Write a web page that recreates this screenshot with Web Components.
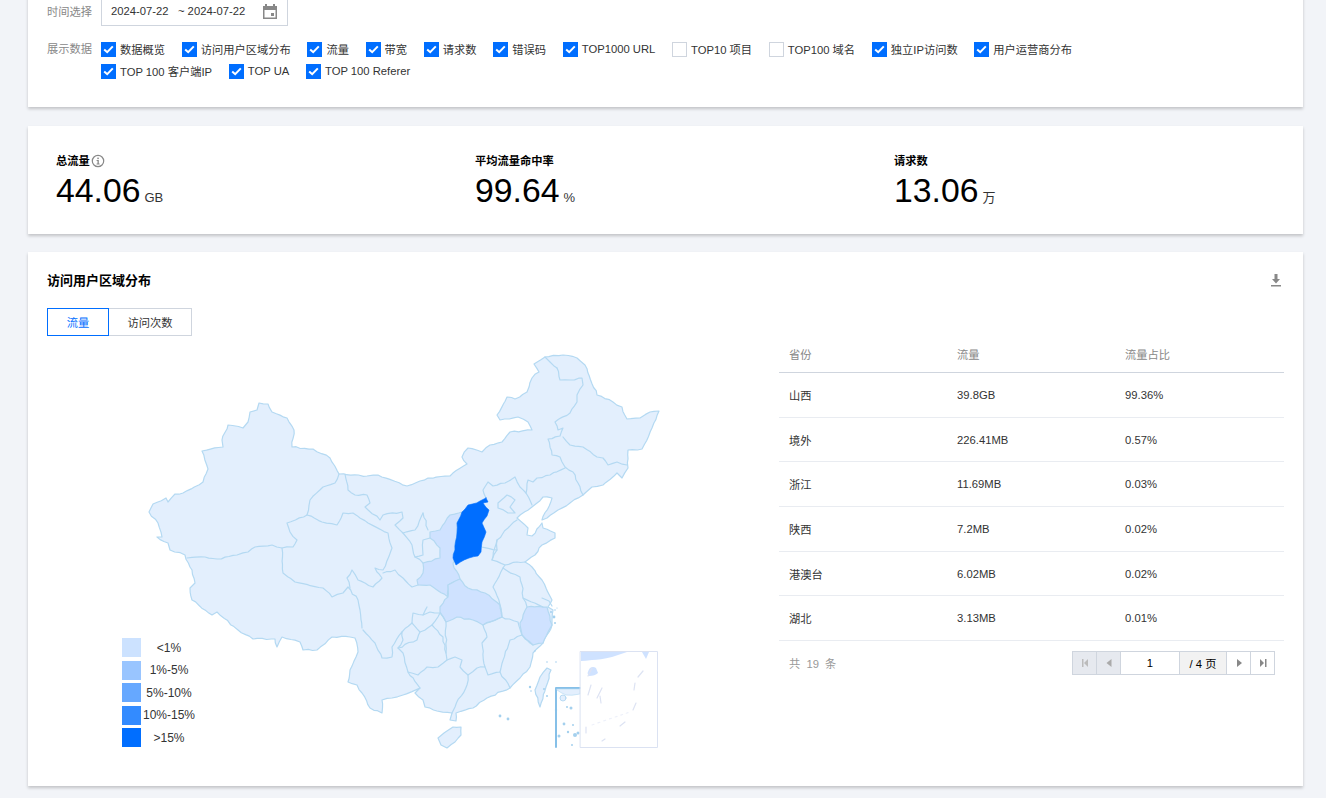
<!DOCTYPE html>
<html lang="zh"><head><meta charset="utf-8"><title>统计</title>
<style>
html,body{margin:0;height:798px;overflow:hidden;background:#f2f4f8;font-family:"Liberation Sans","Noto Sans CJK SC",sans-serif;font-size:11.25px;color:#333}
</style></head><body>
<x-page>
  <x-filter-card></x-filter-card>
  <x-stats-card></x-stats-card>
  <x-region-card></x-region-card>
</x-page>
<script>
const def=(name,html,extra={})=>{customElements.define(name,class extends HTMLElement{
  constructor(){super();this.attachShadow({mode:'open'}).innerHTML=typeof html==='function'?html(this):html;}
  connectedCallback(){ if(extra.init) extra.init(this); }
});};

def('x-page',`<style>:host{display:flex;flex-direction:column;gap:18.500px;padding:0 23px 0 28px;margin-top:-20px}</style><slot></slot>`);

def('x-card',`<style>:host{display:block;background:#fff;box-shadow:0 2px 3px 0 rgba(0,0,0,.2);box-sizing:border-box}</style><slot></slot>`);

def('x-check',`<style>
:host{display:inline-flex;align-items:center;gap:4px;height:22px;white-space:nowrap;color:#333}
.b{width:15px;height:15px;box-sizing:border-box;background:#006eff;display:flex;align-items:center;justify-content:center}
:host([off]) .b{background:#fff;border:1px solid #cfd5de}
:host([off]) svg{display:none}
</style><span class="b"><svg width="11" height="9" viewBox="0 0 11 9"><path d="M1.2 4.4 4.2 7.2 9.8 1.4" fill="none" stroke="#fff" stroke-width="2"/></svg></span><slot></slot>`);

def('x-filter-card',`<style>
:host{display:block}
x-card{height:127px;padding:16px 19px 0}
.r{display:flex;align-items:center}
.lab{width:54px;color:#888;flex:none}
.input{width:187px;height:30px;box-sizing:border-box;border:1px solid #cfd5de;display:flex;align-items:center;padding:0 10px 0 9px;color:#333;justify-content:space-between;white-space:pre}
.row2{margin-top:12px;align-items:flex-start}
.checks{display:flex;flex-wrap:wrap;column-gap:16.700px;width:1100px}
.brk{flex-basis:100%;height:0}
</style>
<x-card>
 <div class="r"><span class="lab">时间选择</span><div class="input"><span>2024-07-22 &nbsp; ~ 2024-07-22</span>
  <svg width="14" height="15" viewBox="0 0 14 15"><path fill="#888" fill-rule="evenodd" d="M2 0h2v2h6V0h2v2h2v13H0V2h2zM1.5 6v7.5h11V6zM8 9h3v3H8z"/></svg></div></div>
 <div class="r row2"><span class="lab" style="line-height:22px">展示数据</span><div class="checks">
  <x-check>数据概览</x-check><x-check>访问用户区域分布</x-check><x-check>流量</x-check><x-check>带宽</x-check><x-check>请求数</x-check><x-check>错误码</x-check><x-check>TOP1000 URL</x-check><x-check off>TOP10 项目</x-check><x-check off>TOP100 域名</x-check><x-check>独立IP访问数</x-check><x-check>用户运营商分布</x-check><span class="brk"></span><x-check>TOP 100 客户端IP</x-check><x-check>TOP UA</x-check><x-check>TOP 100 Referer</x-check>
 </div></div>
</x-card>`);

def('x-stat',h=>`<style>
:host{display:block;color:#000}
.l{font-weight:700;font-size:11.25px;line-height:14px;display:flex;align-items:center;gap:1px}
.v{display:flex;align-items:baseline;gap:4px;line-height:37px;margin-top:4px}
.n{font-size:33.75px}
.u{font-size:13px;color:#333}
svg{display:block}
</style><div class="l"><span>${h.getAttribute('label')}</span>${h.hasAttribute('info')?`<svg width="14" height="14" viewBox="0 0 14 14"><circle cx="7" cy="7" r="5.7" fill="none" stroke="#888" stroke-width="1.2"/><rect x="6.3" y="3.6" width="1.5" height="1.5" fill="#888"/><path d="M5.6 6h2.2v3.6h.8v.9H5.6v-.9h.9V6.900H5.600z" fill="#888"/></svg>`:''}</div>
<div class="v"><span class="n">${h.getAttribute('value')}</span><span class="u">${h.getAttribute('unit')}</span></div>`);

def('x-stats-card',`<style>
:host{display:block}
x-card{height:108px;padding:28px 0 0 28px;display:grid;grid-template-columns:repeat(3,419px)}
</style><x-card>
<x-stat label="总流量" info value="44.06" unit="GB"></x-stat>
<x-stat label="平均流量命中率" value="99.64" unit="%"></x-stat>
<x-stat label="请求数" value="13.06" unit="万"></x-stat>
</x-card>`);

def('x-tabs',`<style>
:host{display:flex;height:28px;width:145px}
span{box-sizing:border-box;height:28px;display:flex;align-items:center;justify-content:center;border:1px solid #cfd5de;color:#333}
.a{width:62px;border-color:#006eff;color:#006eff}
.b{width:83px;border-left:0}
</style><span class="a">流量</span><span class="b">访问次数</span>`);

/* ---------- map ---------- */
const OUT=`149,512 153,504 166,498 168,502 175,494 183,493 203,482 208,469 202,451 223,447 222,440 228,425 243,428 248,422 250,412 257,410 259,403 268,404 272,412 287,418 294,430 292,447 313,449 330,458 339,474 367,476 378,475 407,486 420,481 428,478 450,476 467,464 462,457 468,448 482,452 490,445 502,442 510,432 532,430 528,422 518,417 500,420 497,415 507,397 515,399 527,392 532,378 539,372 534,364 545,357 563,355 577,358 585,365 597,395 613,402 622,407 627,419 640,418 650,412 659,411 652,428 642,449 628,450 628,468 622,478 617,473 603,485 592,487 583,495 570,503 558,510 547,518 542,520 552,498 543,497 532,507 517,518 528,528 527,535 532,536 542,523 543,528 555,533 555,538 542,545 535,555 525,562 532,567 542,580 552,600 548,607 553,610 552,625 543,643 533,653 530,667 520,678 510,688 487,698 473,708 456,713 456,721 450,720 452,713 437,711 425,707 423,700 415,693 420,688 403,695 392,698 382,700 382,713 370,708 362,693 357,685 348,682 350,670 358,652 355,638 350,637 332,637 317,650 303,650 300,642 282,637 277,647 275,639 253,639 238,630 217,612 212,615 192,600 190,588 195,583 192,570 190,567 185,555 170,550 168,543 157,537 162,537 158,523`;
const LINES=[
`187,558 205,557 217,559 237,555 248,552 255,547 272,545 282,548 293,547 297,540 290,532 287,523 307,515 310,500 323,487 335,483 339,474`,
`307,515 322,522 337,525 343,513 353,513 368,523 388,533 392,548 383,570 375,568 382,578 373,587 358,580 352,570 347,578 350,588`,
`345,474 348,490 355,495 367,495 370,503 365,507 380,520 383,515 402,512 403,518 395,525 403,533`,
`423,513 415,530 403,533 412,545 415,557 423,555 423,540 430,538`,
`423,513 428,530`,
`383,573 395,570 403,578 412,587 418,585`,
`415,557 423,563`,
`282,548 283,573 295,582 323,588 332,597 343,593 348,587 358,600 360,610 362,628`,
`363,630 375,643 382,658 392,657 392,647 402,632 403,640 398,648 403,653 408,672 420,688`,
`427,607 423,615 430,612 440,613`,
`402,632 412,623 413,613 423,615`,
`412,623 420,632 417,640 398,648`,
`420,632 432,625 443,637 446,653 447,660 438,667 427,667 418,675 408,672`,
`432,625 440,613 446,622 446,653`,
`447,660 455,657 462,660 460,667 468,675 477,668 485,667 482,643 487,637 483,625`,
`485,667 488,675 500,672 510,640 522,635`,
`483,625 502,617 518,622 522,635 533,645`,
`500,672 510,688`,
`468,675 467,685 455,707 452,713`,
`502,617 500,605 493,587 497,580 503,568 505,565 492,560 497,550 481,547`,
`497,540 492,560`,
`517,520 508,528 497,540 497,550`,
`505,565 517,562 525,562`,
`503,568 520,577 522,585 523,598 543,607`,
`523,598 527,607`,
`557,368 560,380 570,380 582,378 583,385 577,395 577,402 570,413 555,422 558,430 563,428 560,436 548,439 552,455 560,457 565,467 573,472 578,483 583,495`,
`545,357 550,362 557,368`,
`563,437 570,445 583,447 597,457 603,458 608,465 617,462 627,465`,
`565,468 550,475 537,478 533,482 528,480 526,493 532,505`,
`486,498 483,490 488,482 493,486 505,483 515,477 520,487 526,493`,
`498,503 507,495 515,500 510,507 515,513 508,513 498,508 498,503`,
`542,598 549,601 552,606`,
];
const SX=`486,498 488,502 483,503 489,510 487,516 482,523 486,532 482,542 481,552 478,556 469,558 456,565 453,558 455,550 457,533 457,523 462,512 468,505 480,501`;
const SN=`462,512 450,515 440,530 430,532 430,538 440,548 440,558 423,563 423,573 417,580 418,585 430,585 448,597 448,585 460,579 453,564 455,550 457,533 457,523`;
const HB=`448,585 460,579 468,588 485,593 500,605 502,617 483,625 473,620 457,617 446,622 440,612 440,607 448,597`;
const ZJ=`527,607 547,607 552,625 543,643 533,645 522,635 520,623`;
const HN=`461,727 453,727 444,733 438,738 441,745 447,748 455,742 461,735`;
const TW=`547,668 551,670 546,687 540,707 535,690 540,677`;
function jag(str,closed,seed){
  let r=seed*9301+49297;const rnd=()=>{r=(r*9301+49297)%233280;return r/233280-.5};
  const p=str.trim().split(/\s+/).map(s=>s.split(',').map(Number));
  if(closed)p.push(p[0]);
  const o=[p[0]];
  for(let i=1;i<p.length;i++){
    const [a,b]=p[i-1],[c,d]=p[i],l=Math.hypot(c-a,d-b),n=Math.floor(l/4);
    for(let k=1;k<n;k++){const t=k/n;o.push([+(a+(c-a)*t+rnd()*1.5).toFixed(1),+(b+(d-b)*t+rnd()*1.5).toFixed(1)]);}
    o.push(p[i]);
  }
  return 'M'+o.map(q=>q.join(' ')).join('L')+(closed?'Z':'');
}
const ISL=[[500,716,1.4],[508,719,1.4],[530,687,1.2],[531,691,.8],[547,662,.8],[556,662,.8],[571,708,1.5],[567,707,1],[564,724,1.4],[573,725,1],[575,735,2],[568,732,1.2],[578,733,1.5],[559,736,1.5],[572,745,1],[556,710,1.2],[551,612,1],[554,617,1.4],[555,623,1],[555,610,.8],[557,608,.6],[535,651,.7],[544,689,1],[547,696,1]];
const PALE=[[592,668,588,676],[643,671,638,677],[591,685,588,695],[602,688,597,698],[635,683,634,690],[600,696,601,703],[636,703,633,710],[625,722,620,726],[586,727,586,733],[605,739,602,741]];
def('x-map',`<style>
:host{display:block;position:relative;width:732px;height:430px;flex:none}
svg{display:block}
.legend{position:absolute;left:75px;top:301px;display:flex;flex-direction:column;gap:3.5px;font-size:12px;color:#333}
.li{display:flex;align-items:center;height:19px}
.s{width:19px;height:19px;flex:none}
.t{width:56px;text-align:center;white-space:nowrap}
</style>
<svg id="m" width="732" height="430" viewBox="47 337 732 430"></svg>
<div class="legend">
<div class="li"><span class="s" style="background:#cce2ff"></span><span class="t">&lt;1%</span></div>
<div class="li"><span class="s" style="background:#99c5ff"></span><span class="t">1%-5%</span></div>
<div class="li"><span class="s" style="background:#66a8ff"></span><span class="t">5%-10%</span></div>
<div class="li"><span class="s" style="background:#338bff"></span><span class="t">10%-15%</span></div>
<div class="li"><span class="s" style="background:#006eff"></span><span class="t">&gt;15%</span></div>
</div>`,{init(h){
  const st='#b4d9f2';
  let s=`<g stroke-linejoin="round" stroke-linecap="round" stroke-width="1.2">`;
  s+=`<path d="${jag(OUT,true,3)}" fill="#e3effd" stroke="${st}"/>`;
  s+=`<path d="${jag(SN,true,5)}" fill="#cfe2ff" stroke="${st}"/><path d="${jag(HB,true,6)}" fill="#cfe2ff" stroke="${st}"/><path d="${jag(ZJ,true,7)}" fill="#cfe2ff" stroke="${st}"/>`;
  s+=LINES.map((l,i)=>`<path d="${jag(l,false,i+11)}" fill="none" stroke="${st}"/>`).join('');
  s+=`<path d="${jag(SX,true,8)}" fill="#006eff" stroke="#006eff" stroke-width=".6"/>`;
  s+=`<path d="${jag(HN,true,9)}" fill="#e3effd" stroke="${st}"/><path d="${jag(TW,true,10)}" fill="#e3effd" stroke="${st}"/>`;
  s+=ISL.map(([x,y,r])=>`<circle cx="${x}" cy="${y}" r="${r}" fill="#a4d0ee"/>`).join('');
  s+=`<path d="M580 688H556V747" fill="none" stroke="#86c0e8" stroke-width="2"/><path d="M557 689H580V694Q571 696 566 695Q561 693 557 690Z" fill="#e3effd" stroke="#b2d8f2" stroke-width=".6"/><circle cx="563" cy="698" r="3" fill="#e3effd" stroke="#a4d0ee" stroke-width=".7"/>`;
  s+=`<rect x="580.500" y="651.500" width="77" height="96" fill="#fff" stroke="#dbe2f2" stroke-width="1"/>`;
  s+=`<path d="M581 652H627L612 657Q600 660 592 660Q585 661 581 661Z" fill="#cfe2ff" stroke="none"/><path d="M642 652H649L646 659Z" fill="#cfe2ff" stroke="none"/><path d="M590 668Q593 666 596 668L598 673Q595 676 589 676Q586 673 590 668Z" fill="#cfe2ff" stroke="none"/>`;
  s+=PALE.map(a=>`<path d="M${a[0]} ${a[1]}L${a[2]} ${a[3]}" stroke="#dde3f3"/>`).join('');
  s+=`<path d="M592 725Q612 718 630 712" fill="none" stroke="#eef1fa" stroke-dasharray="2 4"/>`;
  s+=`</g>`;
  h.shadowRoot.getElementById('m').innerHTML=s;
}});

def('x-pager',`<style>
:host{display:flex;height:24px;font-size:11.25px;color:#000}
span{box-sizing:border-box;height:24px;width:25px;border:1px solid #cfd5de;margin-left:-1px;display:flex;align-items:center;justify-content:center;background:#fff}
.d{background:#e6e9ef}
.i{width:60px}.p{width:48px;background:#f2f2f2;white-space:pre}
</style>
<span class="d" style="margin-left:0"><svg width="8" height="8" viewBox="0 0 8 8"><path d="M1 0h1.500v8H1zM7 0v8L3 4z" fill="#bbb"/></svg></span>
<span class="d"><svg width="8" height="8" viewBox="0 0 8 8"><path d="M6.500 0v8L1.500 4z" fill="#aaa"/></svg></span>
<span class="i">1</span><span class="p">/ 4 页</span>
<span><svg width="8" height="8" viewBox="0 0 8 8"><path d="M2 0v8l5-4z" fill="#888"/></svg></span>
<span><svg width="8" height="8" viewBox="0 0 8 8"><path d="M6 0h1.500v8H6zM1 0v8l4-4z" fill="#888"/></svg></span>`);

const ROWS=[['山西','39.8GB','99.36%'],['境外','226.41MB','0.57%'],['浙江','11.69MB','0.03%'],['陕西','7.2MB','0.02%'],['港澳台','6.02MB','0.02%'],['湖北','3.13MB','0.01%']];
def('x-table',`<style>
:host{display:block;width:505px;flex:none}
.r{display:grid;grid-template-columns:168px 168px 169px;align-items:center;box-sizing:border-box;height:44.7px;border-bottom:1px solid #e9ecf1;color:#333}
.r>div{padding-left:10px}
.h{height:36px;padding-bottom:2px;color:#888;border-bottom-color:#cfd5de}
.r:last-of-type{border-bottom-color:#cfd5de}
.f{display:flex;justify-content:space-between;align-items:center;margin-top:10px;padding:0 9px 0 10px}
.c{color:#999;word-spacing:3px}
</style>
<div class="r h"><div>省份</div><div>流量</div><div>流量占比</div></div>
${ROWS.map(r=>`<div class="r">${r.map(c=>`<div>${c}</div>`).join('')}</div>`).join('')}
<div class="f"><span class="c">共 19 条</span><x-pager></x-pager></div>`);

def('x-region-card',`<style>
:host{display:block}
x-card{height:534px;padding:0 19px;}
.head{display:flex;justify-content:space-between;align-items:center;height:56px}
h2{margin:-2px 0 0;font-size:13px;font-weight:700;color:#000}
.body{display:flex;margin-top:1px}
svg{display:block}
</style><x-card>
<div class="head"><h2>访问用户区域分布</h2><svg width="12" height="13" viewBox="0 0 12 13" style="margin-right:2px"><path d="M4.500 0h3v5h2.500L6 9.500 2 5h2.500zM1 11h10v1.600H1z" fill="#888"/></svg></div>
<x-tabs></x-tabs>
<div class="body"><x-map></x-map><x-table></x-table></div>
</x-card>`);
</script>
</body></html>
